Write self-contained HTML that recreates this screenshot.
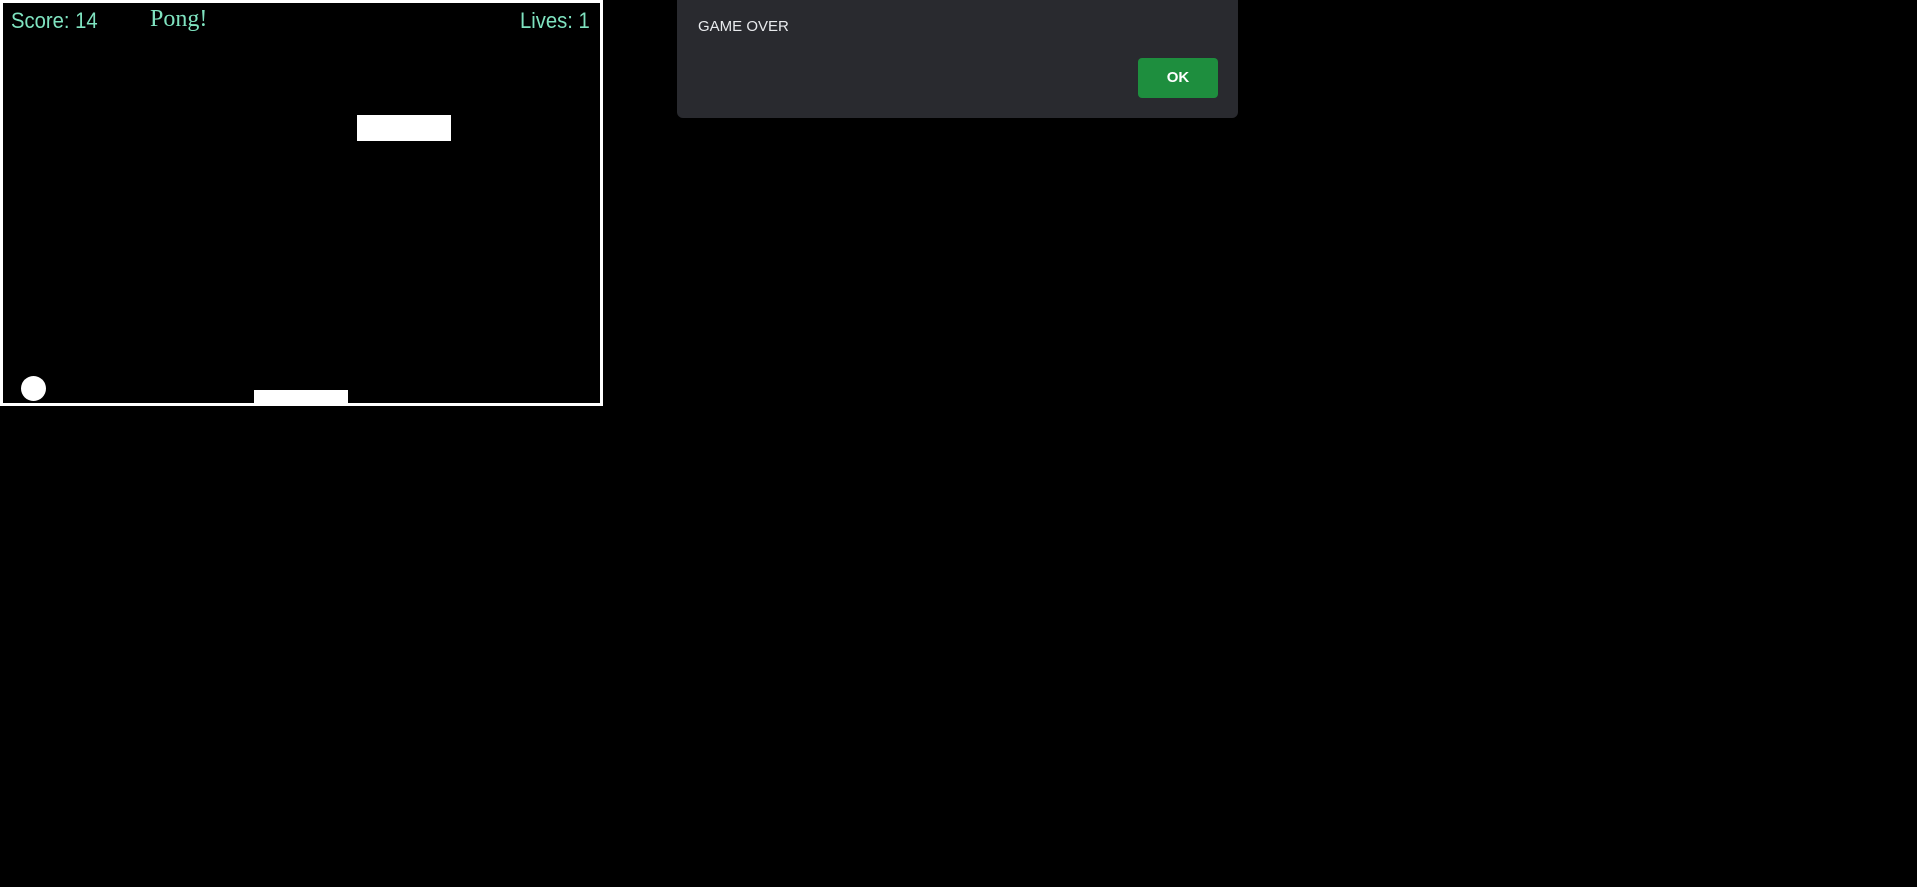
<!DOCTYPE html>
<html><head><style>
html,body{margin:0;padding:0;background:#000;width:1917px;height:887px;overflow:hidden;position:relative}
.cv{position:absolute;left:0;top:0;width:597px;height:400px;border:3px solid #fff;background:#000}
.t{position:absolute;color:#7fe3c0;font-family:"Liberation Sans",sans-serif;font-size:22px;top:8px;transform:scaleX(0.92);transform-origin:left}
.r{position:absolute;background:#fff}
.dlg{position:absolute;left:677px;top:-10px;width:561px;height:128px;background:#292a2f;border-radius:6px}
.msg{position:absolute;left:21px;top:28px;color:#e8eaed;font-family:"Liberation Sans",sans-serif;font-size:15px}
.ok{position:absolute;left:461px;top:68px;width:80px;height:40px;background:#1e8e3e;border-radius:4px;color:#fff;font:bold 15px "Liberation Sans",sans-serif;text-align:center;line-height:40px}
</style></head><body>
<div class="cv"></div>
<div class="t" style="left:11px">Score: 14</div>
<div class="t" style="left:150px;top:6px;font-family:'Liberation Serif',serif;font-size:24px;transform:none">Pong!</div>
<div class="t" style="left:520px">Lives: 1</div>
<div class="r" style="left:357px;top:115px;width:94px;height:26px"></div>
<div class="r" style="left:254px;top:390px;width:94px;height:15px"></div>
<div class="r" style="left:21px;top:376px;width:25px;height:25px;border-radius:50%"></div>
<div class="dlg"><div class="msg">GAME OVER</div><div class="ok">OK</div></div>
</body></html>
